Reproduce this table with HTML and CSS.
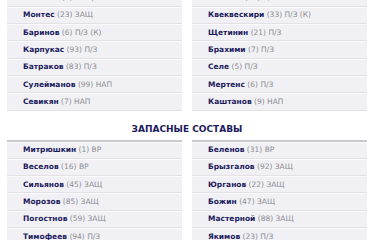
FILE: index.html
```html
<!DOCTYPE html>
<html lang="ru">
<head>
<meta charset="utf-8">
<link rel="stylesheet" href="styles.css">
</head>
<body>
<div class="page">
  <div class="teams starting">
    <ul class="col">
      <li class="row"><b>Ненахов</b> (5) ЗАЩ</li>
      <li class="row"><b>Монтес</b> (23) ЗАЩ</li>
      <li class="row"><b>Баринов</b> (6) П/З (К)</li>
      <li class="row"><b>Карпукас</b> (93) П/З</li>
      <li class="row"><b>Батраков</b> (83) П/З</li>
      <li class="row"><b>Сулейманов</b> (99) НАП</li>
      <li class="row"><b>Севикян</b> (7) НАП</li>
    </ul>
    <ul class="col">
      <li class="row"><b>Ахишин</b> (20) П/З</li>
      <li class="row"><b>Квеквескири</b> (33) П/З (К)</li>
      <li class="row"><b>Щетинин</b> (21) П/З</li>
      <li class="row"><b>Брахими</b> (7) П/З</li>
      <li class="row"><b>Селе</b> (5) П/З</li>
      <li class="row"><b>Мертенс</b> (6) П/З</li>
      <li class="row"><b>Каштанов</b> (9) НАП</li>
    </ul>
  </div>
  <h2 class="heading">ЗАПАСНЫЕ СОСТАВЫ</h2>
  <div class="teams bench">
    <ul class="col">
      <li class="row"><b>Митрюшкин</b> (1) ВР</li>
      <li class="row"><b>Веселов</b> (16) ВР</li>
      <li class="row"><b>Сильянов</b> (45) ЗАЩ</li>
      <li class="row"><b>Морозов</b> (85) ЗАЩ</li>
      <li class="row"><b>Погостнов</b> (59) ЗАЩ</li>
      <li class="row"><b>Тимофеев</b> (94) П/З</li>
    </ul>
    <ul class="col">
      <li class="row"><b>Беленов</b> (31) ВР</li>
      <li class="row"><b>Брызгалов</b> (92) ЗАЩ</li>
      <li class="row"><b>Юрганов</b> (22) ЗАЩ</li>
      <li class="row"><b>Божин</b> (47) ЗАЩ</li>
      <li class="row"><b>Мастерной</b> (88) ЗАЩ</li>
      <li class="row"><b>Якимов</b> (23) П/З</li>
    </ul>
  </div>
</div>
</body>
</html>
```
FILE: styles.css
```css
html, body {
  margin: 0;
  padding: 0;
  background: #ffffff;
}
body {
  font-family: "DejaVu Sans", "Noto Sans", sans-serif;
  overflow: hidden;
}
.page {
  padding: 0 8px 0 7px;
}
.teams {
  display: grid;
  grid-template-columns: 1fr 1fr;
  column-gap: 10px;
}
.starting {
  margin-top: -10.6px;
}
.col {
  list-style: none;
  margin: 0;
  padding: 0;
}
.bench .col {
  border-top: 2px solid #c9c9cc;
}
.row {
  box-sizing: border-box;
  height: 17.33px;
  display: flex;
  align-items: center;
  padding-left: 16px;
  background: #f1f1f5;
  border-bottom: 1px solid #e1e1e6;
  box-shadow: inset 0 1px 0 #fafafc;
  font-size: 7.5px;
  color: #8c8c92;
  white-space: pre;
}
.row b {
  color: #1c1b5c;
  font-weight: 700;
}
.heading {
  margin: 0;
  padding: 11.8px 0 5px;
  line-height: 12px;
  text-align: center;
  font-size: 9px;
  font-weight: 700;
  color: #1c1b5c;
}
```
